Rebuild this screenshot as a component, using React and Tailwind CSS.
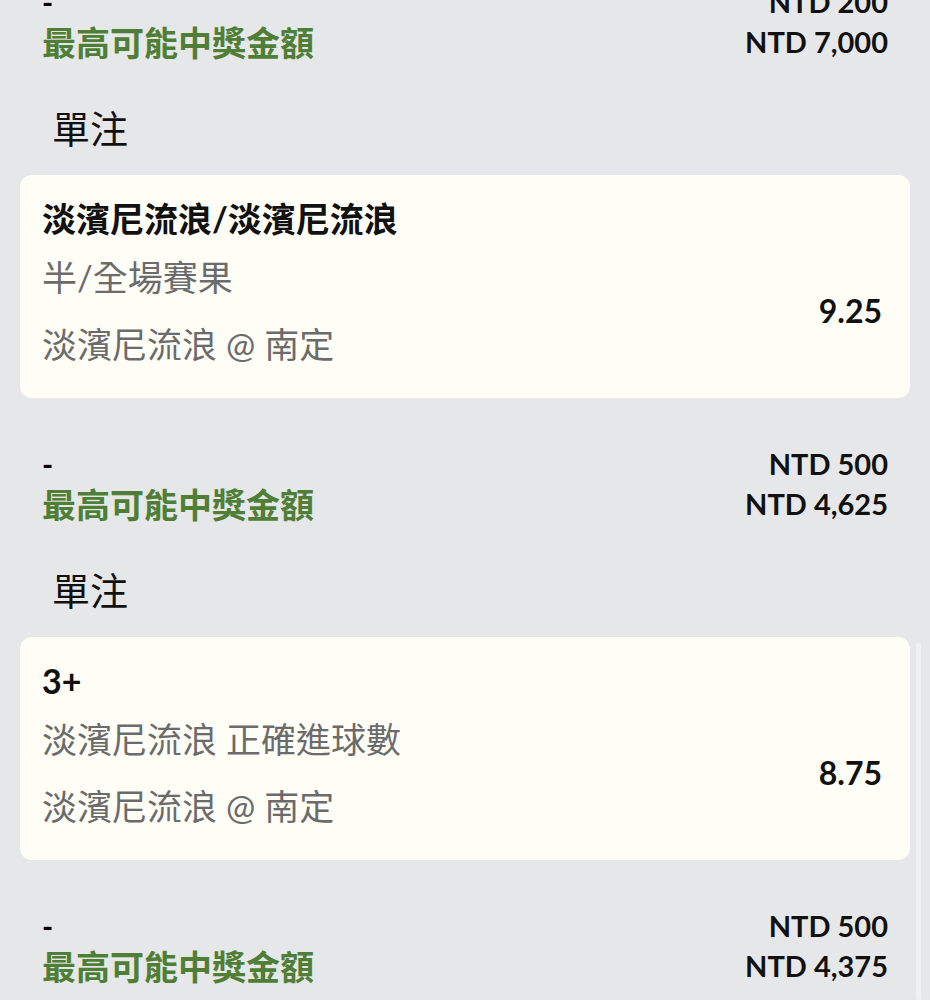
const bets = [
  {
    stake: "NTD 200",
    payout: "NTD 7,000",
  },
  {
    stake: "NTD 500",
    payout: "NTD 4,625",
    selection: "淡濱尼流浪/淡濱尼流浪",
    market: "半/全場賽果",
    match: "淡濱尼流浪 @ 南定",
    odds: "9.25",
  },
  {
    stake: "NTD 500",
    payout: "NTD 4,375",
    selection: "3+",
    market: "淡濱尼流浪 正確進球數",
    match: "淡濱尼流浪 @ 南定",
    odds: "8.75",
  },
];

const font = {
  fontFamily: '"Lato", "Noto Sans CJK TC", sans-serif',
};

function Summary({ stake, payout }) {
  return (
    <div className="px-[42px] font-bold">
      <div className="flex h-[40px] items-center justify-between">
        <span className="text-[30px] text-black">-</span>
        <span className="text-[29px] text-[#111]">{stake}</span>
      </div>
      <div className="flex h-[40px] items-center justify-between">
        <span className="text-[34px] text-[#4f7f36]">最高可能中獎金額</span>
        <span className="text-[29px] text-[#111]">{payout}</span>
      </div>
    </div>
  );
}

function BetCard({ selection, market, match, odds }) {
  return (
    <div className="mx-5 h-[223px] rounded-xl bg-[#fefef6] pl-[22px] pr-[28px] pt-[24px]">
      <div className="h-[40px] text-[34px] font-bold leading-[40px] text-[#111]">
        {selection}
      </div>
      <div className="mt-4 flex items-center justify-between">
        <div className="text-[35px] text-[#6b6b6b]">
          <div className="h-[44px] leading-[44px]">{market}</div>
          <div className="mt-[23px] h-[44px] leading-[44px]">{match}</div>
        </div>
        <div className="text-[32px] font-bold text-[#111]">{odds}</div>
      </div>
    </div>
  );
}

export default function App() {
  return (
    <div
      className="relative h-[1000px] overflow-hidden bg-[#e6e7e9]"
      style={font}
    >
      <div className="-mt-[18px]">
        {bets.map((b, i) => (
          <div key={i} className={i > 0 ? "mt-[46px]" : ""}>
            <Summary stake={b.stake} payout={b.payout} />
            {i < bets.length - 1 && (
              <>
                <div className="mt-[42px] h-[48px] pl-[52px] text-[38px] leading-[48px] text-[#111]">
                  單注
                </div>
                <div className="mt-[23px]">
                  <BetCard {...bets[i + 1]} />
                </div>
              </>
            )}
          </div>
        ))}
      </div>
      <div className="absolute right-[9px] top-[643px] bottom-0 w-[5px] rounded-full bg-[#f1f1f3]" />
    </div>
  );
}
